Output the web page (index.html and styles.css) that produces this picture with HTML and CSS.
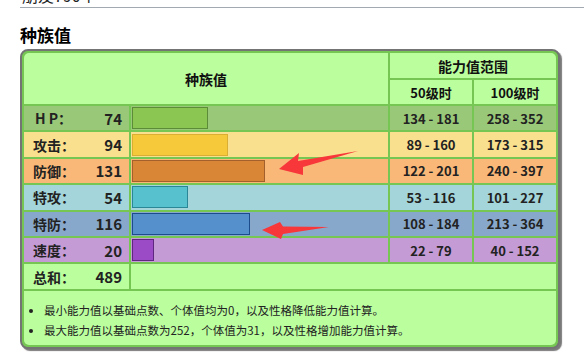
FILE: index.html
```html
<!DOCTYPE html>
<html lang="zh">
<head>
<meta charset="utf-8">
<title>种族值</title>
<link rel="stylesheet" href="styles.css">
</head>
<body>
<div class="cut">朋友790个</div>
<h3 class="heading">种族值</h3>
<div class="frame">
  <div class="grid">
    <div class="hd hd-main">种族值</div>
    <div class="hd hd-range">能力值范围</div>
    <div class="hd">50级时</div>
    <div class="hd">100级时</div>

    <div class="row hp">
      <div class="lab"><span class="spaced">H P：</span><span>74</span></div>
      <div class="barcell"><div class="bar" style="width:74px"></div></div>
      <div class="rng">134 - 181</div>
      <div class="rng">258 - 352</div>
    </div>
    <div class="row atk">
      <div class="lab"><span>攻击：</span><span>94</span></div>
      <div class="barcell"><div class="bar" style="width:94px"></div></div>
      <div class="rng">89 - 160</div>
      <div class="rng">173 - 315</div>
    </div>
    <div class="row def">
      <div class="lab"><span>防御：</span><span>131</span></div>
      <div class="barcell"><div class="bar" style="width:131px"></div></div>
      <div class="rng">122 - 201</div>
      <div class="rng">240 - 397</div>
    </div>
    <div class="row spa">
      <div class="lab"><span>特攻：</span><span>54</span></div>
      <div class="barcell"><div class="bar" style="width:54px"></div></div>
      <div class="rng">53 - 116</div>
      <div class="rng">101 - 227</div>
    </div>
    <div class="row spd">
      <div class="lab"><span>特防：</span><span>116</span></div>
      <div class="barcell"><div class="bar" style="width:116px"></div></div>
      <div class="rng">108 - 184</div>
      <div class="rng">213 - 364</div>
    </div>
    <div class="row spe">
      <div class="lab"><span>速度：</span><span>20</span></div>
      <div class="barcell"><div class="bar" style="width:20px"></div></div>
      <div class="rng">22 - 79</div>
      <div class="rng">40 - 152</div>
    </div>
    <div class="row total">
      <div class="lab"><span>总和：</span><span>489</span></div>
      <div class="span3"></div>
    </div>
    <div class="notes">
      <ul>
        <li>最小能力值以基础点数、个体值均为0，以及性格降低能力值计算。</li>
        <li>最大能力值以基础点数为252，个体值为31，以及性格增加能力值计算。</li>
      </ul>
    </div>
  </div>
</div>
<svg class="arrows" width="584" height="363" viewBox="0 0 584 363">
  <polygon points="279,169 299,153 298,161 358,151 303,167 303,175" fill="#f7373a"/>
  <polygon points="262,230 280,222 283,226.5 329,227 283,234 281,239" fill="#f7373a"/>
</svg>
</body>
</html>
```

FILE: styles.css
```css
html, body {
  margin: 0;
  padding: 0;
  background: #ffffff;
}
body {
  position: relative;
  width: 584px;
  height: 363px;
  overflow: hidden;
  font-family: "Noto Sans CJK SC", "DejaVu Sans", sans-serif;
  color: #222222;
}
.cut {
  margin: -15px 0 0 20px;
  height: 22px;
  line-height: 20px;
  font-size: 16px;
  padding-left: 2px;
  border-bottom: 1px solid #a2a9b1;
  color: #202122;
}
.heading {
  margin: 16px 0 0 20px;
  font-size: 17px;
  line-height: 22px;
  font-weight: bold;
  color: #000;
}
.frame {
  margin: 3px 0 0 20px;
  width: 540px;
  box-sizing: border-box;
  border: 2px solid #747474;
  border-radius: 8px;
  box-shadow: 2px 2px 1px #7a7a7a;
  background: #76c653;
  overflow: hidden;
}
.grid {
  display: grid;
  grid-template-columns: 105px 257px 82px 82px;
  grid-template-rows: 25px 24px repeat(7, 24.4px) 54px;
  gap: 2px;
  padding: 2px;
  background: #76c653;
  border-radius: 6px;
}
.hd {
  background: #bbfe9e;
  display: flex;
  align-items: center;
  justify-content: center;
  font-size: 13px;
  font-weight: bold;
  color: #111;
}
.hd-main {
  grid-column: 1 / 3;
  grid-row: 1 / 3;
  font-size: 14px;
  border-top-left-radius: 5px;
}
.hd-range {
  grid-column: 3 / 5;
  font-size: 14px;
  border-top-right-radius: 5px;
}
.row {
  display: contents;
}
.lab {
  display: flex;
  align-items: center;
  justify-content: space-between;
  padding: 0 7px 0 9px;
  font-size: 15px;
  font-weight: bold;
  color: #222;
}
.lab span:first-child {
  font-size: 14px;
}
.spaced {
  padding-left: 2px;
}
.barcell {
  display: flex;
  align-items: center;
  padding-left: 1px;
}
.bar {
  height: 20px;
  border: 1px solid;
}
.rng {
  display: flex;
  align-items: center;
  justify-content: center;
  font-size: 13px;
  font-weight: bold;
  color: #222;
}
.hp > div { background: #99c878; }
.hp .bar { background: #8bc653; border-color: #5c8c37; }
.atk > div { background: #f9e08f; }
.atk .bar { background: #f6c93a; border-color: #d9ae32; }
.def > div { background: #f9b878; }
.def .bar { background: #d98736; border-color: #a35f2c; }
.spa > div { background: #a3d5da; }
.spa .bar { background: #57c2cd; border-color: #2a8896; }
.spd > div { background: #88a8cb; }
.spd .bar { background: #5590cc; border-color: #1c4c8c; }
.spe > div { background: #c59bd5; }
.spe .bar { background: #9b4bc6; border-color: #5f2780; }
.total > div { background: #bbfe9e; }
.span3 {
  grid-column: 2 / 5;
}
.notes {
  grid-column: 1 / 5;
  background: #bbfe9e;
  border-bottom-left-radius: 5px;
  border-bottom-right-radius: 5px;
  padding-top: 9px;
  font-size: 11.5px;
  color: #222;
}
.notes ul {
  margin: 0;
  padding-left: 20px;
}
.notes li {
  line-height: 20px;
}
.arrows {
  position: absolute;
  left: 0;
  top: 0;
  pointer-events: none;
}
```
